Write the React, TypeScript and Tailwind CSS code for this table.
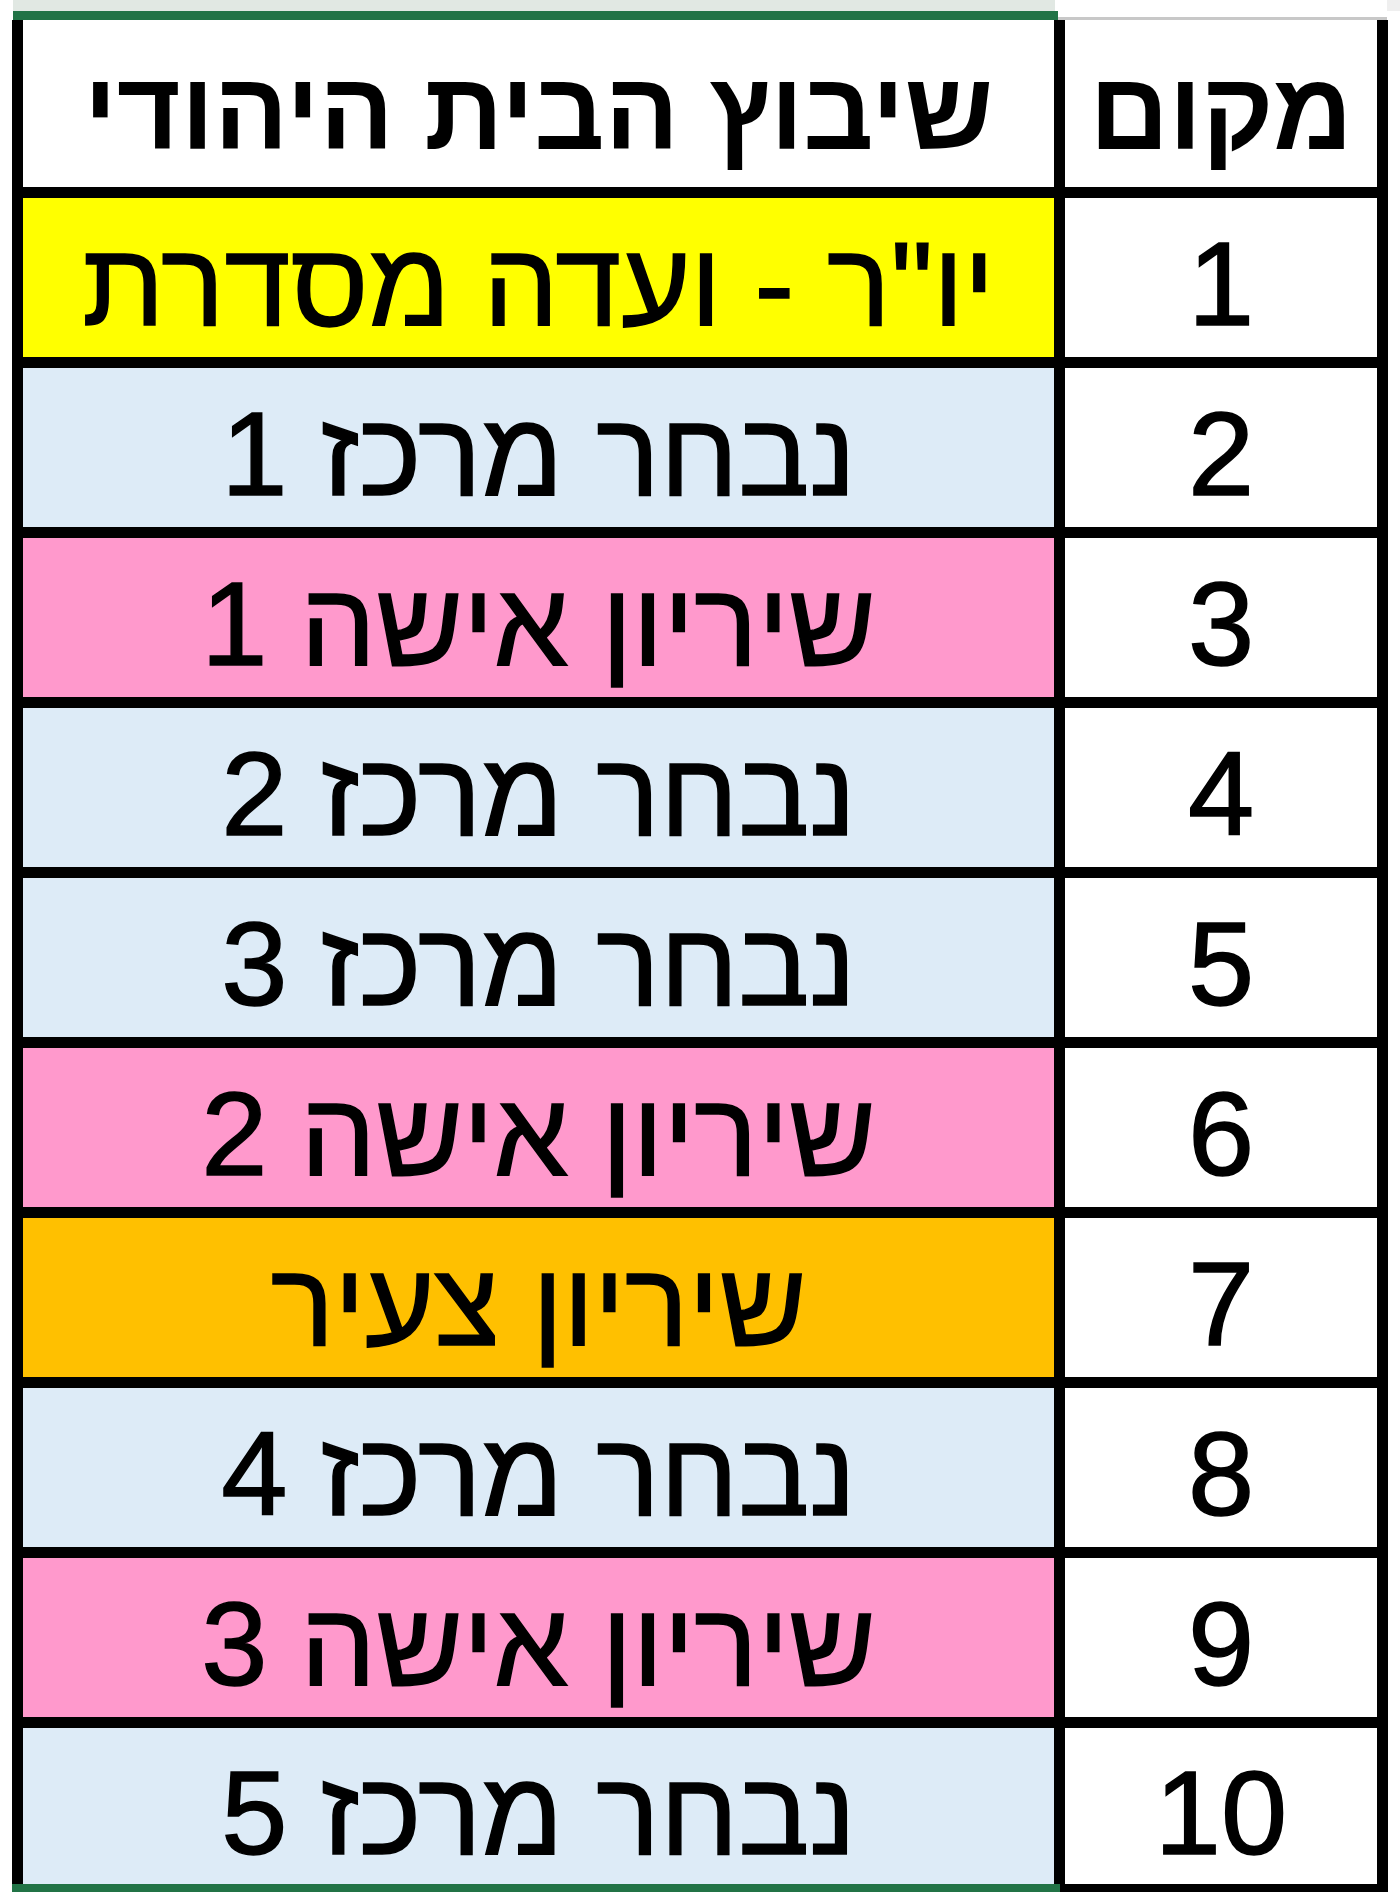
const rows = [
  { n: "1", text: 'יו"ר - ועדה מסדרת', bg: "bg-[#ffff00]" },
  { n: "2", text: "נבחר מרכז 1", bg: "bg-[#ddebf7]" },
  { n: "3", text: "שיריון אישה 1", bg: "bg-[#ff99cc]" },
  { n: "4", text: "נבחר מרכז 2", bg: "bg-[#ddebf7]" },
  { n: "5", text: "נבחר מרכז 3", bg: "bg-[#ddebf7]" },
  { n: "6", text: "שיריון אישה 2", bg: "bg-[#ff99cc]" },
  { n: "7", text: "שיריון צעיר", bg: "bg-[#ffc000]" },
  { n: "8", text: "נבחר מרכז 4", bg: "bg-[#ddebf7]" },
  { n: "9", text: "שיריון אישה 3", bg: "bg-[#ff99cc]" },
  { n: "10", text: "נבחר מרכז 5", bg: "bg-[#ddebf7]" },
];

const font = { fontFamily: '"Liberation Sans", Arial, sans-serif' };

export default function App() {
  return (
    <div className="w-[1400px] h-[1892px] bg-white overflow-hidden flex flex-col" style={font}>
      {/* column header edge */}
      <div className="flex h-[11px]">
        <div className="w-[13px] bg-white" />
        <div className="w-[1042px] bg-[#e1e8e3]" />
        <div className="w-[332px] bg-white" />
        <div className="w-[13px] bg-[#efefef]" />
      </div>
      <div className="flex h-[9px]">
        <div className="w-[13px] bg-white" />
        <div className="w-[1045px] bg-[#217346]" />
        <div className="w-[329px] bg-white border-b-[3px] border-[#c8c8c8]" />
        <div className="w-[13px] bg-white" />
      </div>

      {/* table */}
      <div className="ml-[12px] w-[1376px] bg-black pl-[11px] pr-[11px] grid grid-cols-[1031px_312px] grid-rows-[167px_repeat(9,159px)_156px] gap-x-[11px] gap-y-[11px]">
        <div dir="rtl" className="bg-white flex items-center justify-center pt-[14px] text-[110px] font-bold leading-none text-black">
          שיבוץ הבית היהודי
        </div>
        <div dir="rtl" className="bg-white flex items-center justify-center pt-[14px] text-[110px] font-bold leading-none text-black">
          מקום
        </div>
        {rows.map((r) => (
          <div key={r.n} className="contents">
            <div dir="rtl" className={`${r.bg} flex items-center justify-center pt-[12px] text-[119px] leading-none text-black [-webkit-text-stroke:1.5px_black]`}>
              {r.text}
            </div>
            <div className="bg-white flex items-center justify-center pt-[12px] text-[119px] leading-none text-black [-webkit-text-stroke:1.5px_black]">
              {r.n}
            </div>
          </div>
        ))}
      </div>

      {/* bottom edge */}
      <div className="flex h-[8px]">
        <div className="w-[12px] bg-white" />
        <div className="w-[1048px] bg-[#217346]" />
        <div className="w-[328px] bg-black" />
        <div className="w-[12px] bg-white" />
      </div>
    </div>
  );
}
